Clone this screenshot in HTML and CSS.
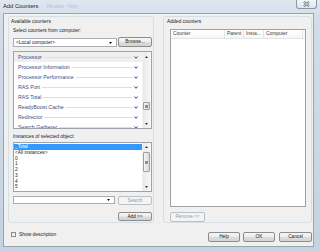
FILE: index.html
```html
<!DOCTYPE html>
<html>
<head>
<meta charset="utf-8">
<link rel="stylesheet" href="styles.css">
</head>
<body>
<div class="window">
  <div class="titlebar">
    <span class="title">Add Counters</span>
    <span class="ghost">Window Help</span>
    <div class="close">
      <svg width="7" height="6" viewBox="0 0 7 6"><path d="M1 0.8L6 5.2M6 0.8L1 5.2" stroke="#55606c" stroke-width="2"/><path d="M1 0.8L6 5.2M6 0.8L1 5.2" stroke="#f4f6f8" stroke-width="0.9"/></svg>
    </div>
  </div>
  <div class="frame">
    <div class="client">
      <div class="groups">
        <section class="group left">
          <div class="glabel">Available counters</div>
          <div class="sub">Select counters from computer:</div>
          <div class="row r1">
            <div class="combo w104"><span class="ctext">&lt;Local computer&gt;</span><svg class="tri" width="3" height="2" viewBox="0 0 3 2"><polygon points="0,0 3,0 1.5,2" fill="#111"/></svg></div>
            <button class="btn w34">Browse...</button>
          </div>
          <div class="list counters">
            <div class="items">
              <div class="grp sel"><span>Processor</span><i class="line"></i><svg class="chev" width="4" height="3" viewBox="0 0 4 3"><path d="M0.4 0.5L2 2.3L3.6 0.5" fill="none" stroke="#1c3aa6" stroke-width="1"/></svg></div>
              <div class="grp"><span>Processor Information</span><i class="line"></i><svg class="chev" width="4" height="3" viewBox="0 0 4 3"><path d="M0.4 0.5L2 2.3L3.6 0.5" fill="none" stroke="#1c3aa6" stroke-width="1"/></svg></div>
              <div class="grp"><span>Processor Performance</span><i class="line"></i><svg class="chev" width="4" height="3" viewBox="0 0 4 3"><path d="M0.4 0.5L2 2.3L3.6 0.5" fill="none" stroke="#1c3aa6" stroke-width="1"/></svg></div>
              <div class="grp"><span>RAS Port</span><i class="line"></i><svg class="chev" width="4" height="3" viewBox="0 0 4 3"><path d="M0.4 0.5L2 2.3L3.6 0.5" fill="none" stroke="#1c3aa6" stroke-width="1"/></svg></div>
              <div class="grp"><span>RAS Total</span><i class="line"></i><svg class="chev" width="4" height="3" viewBox="0 0 4 3"><path d="M0.4 0.5L2 2.3L3.6 0.5" fill="none" stroke="#1c3aa6" stroke-width="1"/></svg></div>
              <div class="grp"><span>ReadyBoost Cache</span><i class="line"></i><svg class="chev" width="4" height="3" viewBox="0 0 4 3"><path d="M0.4 0.5L2 2.3L3.6 0.5" fill="none" stroke="#1c3aa6" stroke-width="1"/></svg></div>
              <div class="grp"><span>Redirector</span><i class="line"></i><svg class="chev" width="4" height="3" viewBox="0 0 4 3"><path d="M0.4 0.5L2 2.3L3.6 0.5" fill="none" stroke="#1c3aa6" stroke-width="1"/></svg></div>
              <div class="grp"><span>Search Gatherer</span><i class="line"></i><svg class="chev" width="4" height="3" viewBox="0 0 4 3"><path d="M0.4 0.5L2 2.3L3.6 0.5" fill="none" stroke="#1c3aa6" stroke-width="1"/></svg></div>
            </div>
            <div class="vscroll s1">
              <div class="arrow"><svg width="3" height="2" viewBox="0 0 3 2"><polygon points="0,2 3,2 1.5,0" fill="#333"/></svg></div>
              <div class="track"><div class="thumb t1"><i class="grip"></i></div></div>
              <div class="arrow"><svg width="3" height="2" viewBox="0 0 3 2"><polygon points="0,0 3,0 1.5,2" fill="#333"/></svg></div>
            </div>
          </div>
          <div class="sub s2">Instances of selected object:</div>
          <div class="list instances">
            <div class="items inst">
              <div class="it on">_Total</div>
              <div class="it">&lt;All instances&gt;</div>
              <div class="it">0</div>
              <div class="it">1</div>
              <div class="it">2</div>
              <div class="it">3</div>
              <div class="it">4</div>
              <div class="it">5</div>
            </div>
            <div class="vscroll s2b">
              <div class="arrow a7"><svg width="3" height="2" viewBox="0 0 3 2"><polygon points="0,2 3,2 1.5,0" fill="#333"/></svg></div>
              <div class="track"><div class="thumb t2"><i class="grip"></i></div></div>
              <div class="arrow a8"><svg width="3" height="2" viewBox="0 0 3 2"><polygon points="0,0 3,0 1.5,2" fill="#333"/></svg></div>
            </div>
          </div>
          <div class="row r3">
            <div class="combo w102"><span class="ctext"></span><svg class="tri" width="3" height="2" viewBox="0 0 3 2"><polygon points="0,0 3,0 1.5,2" fill="#111"/></svg></div>
            <button class="btn w34 off">Search</button>
          </div>
          <div class="row r4">
            <button class="btn w34">Add &gt;&gt;</button>
          </div>
        </section>
        <section class="group right">
          <div class="glabel">Added counters</div>
          <div class="table">
            <div class="thead">
              <span class="c1">Counter</span><span class="c2">Parent</span><span class="c3">Insta...</span><span class="c4">Computer</span><span class="c5"></span>
            </div>
          </div>
          <button class="btn w35 off rm">Remove &lt;&lt;</button>
        </section>
      </div>
      <div class="bottom">
        <label class="check"><span class="box"></span>Show description</label>
        <div class="buttons">
          <button class="btn w32">Help</button>
          <button class="btn w32 ok">OK</button>
          <button class="btn w33 cancel">Cancel</button>
        </div>
      </div>
    </div>
  </div>
</div>
</body>
</html>
```

FILE: styles.css
```css
* { box-sizing: border-box; margin: 0; padding: 0; }
html, body { width: 320px; height: 251px; overflow: hidden; }
body {
  font-family: "Liberation Sans", Arial, sans-serif;
  font-size: 4.9px;
  color: #1b1b1b;
  background: #c8d5e3;
}
.window {
  width: 320px;
  height: 251px;
  display: flex;
  flex-direction: column;
  background: linear-gradient(180deg, #dfe7f0 0, #d2dde9 8%, #c4d2e1 100%);
}
.titlebar { height: 13px; display: flex; align-items: flex-start; }
.title { font-size: 5.8px; line-height: 13px; margin-left: 3px; color: #1e1e1e; }
.ghost {
  font-size: 4.9px; line-height: 13px; margin-left: 8px;
  color: rgba(40, 50, 60, 0.2); filter: blur(0.4px); word-spacing: 2px;
}
.close {
  margin-left: auto; margin-right: 3px;
  width: 21px; height: 9px;
  border: 1px solid #8b97a5; border-top: none;
  border-radius: 0 0 3px 3px;
  background: linear-gradient(#f4f7fa, #dde4ec);
  display: flex; align-items: center; justify-content: center;
}
.frame { flex: 1; display: flex; padding: 0 6px 4px 3px; }
.client {
  flex: 1;
  border: 1px solid #98a4b2;
  background: #f0f0f0;
  padding: 2px 1px 0 4px;
  display: flex; flex-direction: column;
}
.groups {
  display: grid;
  grid-template-columns: 146px 149px;
  column-gap: 9px;
  height: 207px;
}
.group {
  border: 1px solid #d5dfe5;
  border-radius: 3px;
  display: flex; flex-direction: column;
}
.left { padding: 0 1px 0 4px; }
.right { padding: 0 0 0 6px; }
.glabel { line-height: 8px; margin-top: 1px; margin-left: -2px; }
.right .glabel { margin-left: -3px; }
.sub { line-height: 8px; margin-top: 1px; }
.sub.s2 { margin-top: 4px; }
.row { display: flex; justify-content: space-between; align-items: flex-start; }
.r1 { margin-top: 2px; height: 10px; }
.r3 { margin-top: 4px; }
.r4 { margin-top: 7px; justify-content: flex-end; }

.combo {
  background: #fff;
  border: 1px solid #abadb3;
  display: flex; align-items: center;
  padding: 0 4px 0 2px;
}
.w104 { width: 104px; height: 9px; margin-top: 1px; }
.w102 { width: 102px; height: 8px; }
.ctext { flex: 1; line-height: 7px; }
.tri { display: block; }

.btn {
  font-family: inherit; font-size: 4.7px; color: #1b1b1b;
  height: 9px; line-height: 7px;
  border: 1px solid #8a8c8e; border-radius: 2px;
  background: linear-gradient(180deg, #f6f6f6 0%, #ececec 48%, #dedede 52%, #d3d3d3 100%);
  text-align: center;
}
.r1 .btn { height: 10px; line-height: 8px; }
.w32 { width: 32px; height: 10px; line-height: 8px; }
.w33 { width: 33px; height: 10px; line-height: 8px; }
.w34 { width: 34px; }
.w35 { width: 35px; height: 10px; line-height: 8px; }
.btn.off {
  color: #9a9a9a;
  border-color: #bcc0c4;
  background: #f4f4f4;
}

.list {
  margin-top: 4px;
  border: 1px solid #9ea3a9;
  background: #fff;
  display: flex;
}
.counters { height: 78px; }
.instances { height: 50px; margin-top: 1px; }
.items { flex: 1; overflow: hidden; }
.grp {
  height: 10px;
  display: flex; align-items: center;
  padding: 0 4px 0 4px;
  font-size: 5.3px; color: #3d4f86;
}
.grp.sel { background: #efefef; }
.grp .line { flex: 1; height: 1px; background: #d7deec; margin: 0 2px 0 2px; }
.chev { display: block; }

.inst { padding-top: 1px; }
.it { height: 5.75px; line-height: 5.75px; padding-left: 1px; font-size: 4.8px; }
.it.on { background: #3399ff; color: #fff; }

.vscroll {
  width: 9px;
  display: flex; flex-direction: column;
  background: linear-gradient(90deg, #e9e9e9, #f7f7f7);
  border-left: 1px solid #f2f2f2;
}
.arrow {
  height: 9px;
  display: flex; align-items: center; justify-content: center;
  padding-right: 1px;
}
.a7 { height: 7px; }
.a8 { height: 8px; }
.track { flex: 1; display: flex; flex-direction: column; }
.thumb {
  width: 7px;
  border: 1px solid #9da1a6; border-radius: 1px;
  background: linear-gradient(90deg, #f4f4f4, #d9d9d9);
  display: flex; align-items: center; justify-content: center;
}
.t1 { margin-top: 41px; height: 8px; }
.t2 { margin-top: 2px; height: 20px; }
.grip {
  width: 3px; height: 3px;
  background: repeating-linear-gradient(180deg, #8d8d8d 0 0.6px, transparent 0.6px 1.2px);
}

.table {
  margin-top: 3px;
  width: 136px; height: 178px;
  border: 1px solid #9ea3a9;
  background: #fff;
}
.thead {
  height: 9px;
  display: flex;
  background: linear-gradient(#ffffff, #f5f6f7);
  border-bottom: 1px solid #e5e5e5;
  color: #3c3c3c;
}
.thead span { line-height: 8px; padding-left: 2px; border-right: 1px solid #e3e3e3; white-space: nowrap; overflow: hidden; }
.c1 { width: 54px; }
.c2 { width: 19px; }
.c3 { width: 20px; }
.c4 { width: 39px; }
.c5 { flex: 1; border-right: none !important; }
.rm { margin-top: 5px; }

.bottom {
  margin-top: 9px;
  height: 10px;
  display: flex; justify-content: space-between; align-items: flex-start;
  padding-left: 3px;
}
.check { display: flex; align-items: center; line-height: 5px; }
.box {
  width: 5px; height: 5px; margin-right: 3px;
  border: 1px solid #8f8f8f;
  background: linear-gradient(135deg, #dcdcdc, #fbfbfb);
}
.buttons { display: flex; }
.ok { margin-left: 3px; }
.cancel { margin-left: 4px; }
```
